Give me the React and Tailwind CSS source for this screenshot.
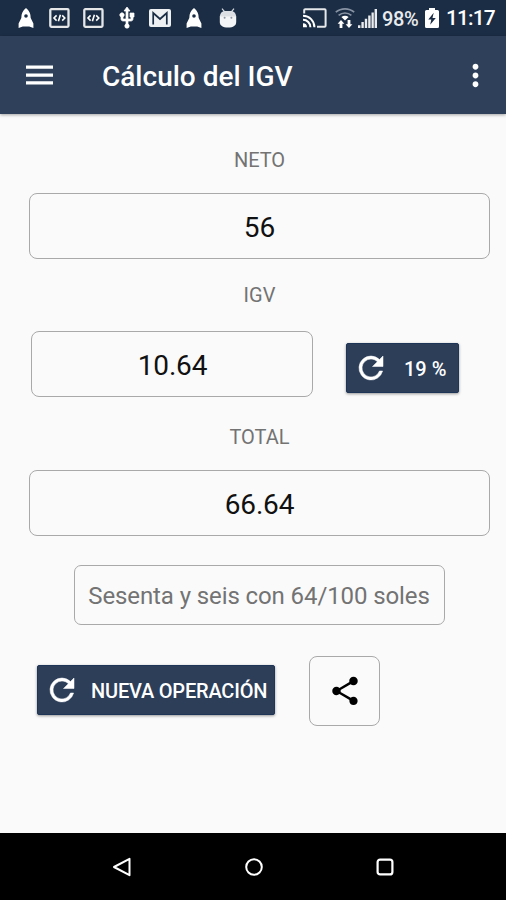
import React from "react";
import { MdMoreVert, MdShare } from "react-icons/md";

const RocketIcon = ({ className }) => (
  <svg viewBox="0 0 16 20" className={`w-4 h-5 shrink-0 ${className}`} fill="#fff">
    <path
      fillRule="evenodd"
      d="M8 0C4.8 2.4 3.4 5.4 3.3 10L.6 15.6V20l4.2-1.6h6.4l4.2 1.6v-4.4L12.7 10C12.6 5.4 11.2 2.4 8 0ZM8 6.2a1.8 1.8 0 1 0 0 3.6 1.8 1.8 0 0 0 0-3.6Z"
    />
  </svg>
);

const CodeIcon = ({ className }) => (
  <svg viewBox="0 0 21 20" className={`w-[21px] h-5 shrink-0 ${className}`} fill="none" stroke="#fff">
    <rect x="1.3" y="1.2" width="18.2" height="17.6" rx="1" strokeWidth="2.3" stroke="#e4e6e8" />
    <path d="M7.6 7.4 5 10l2.6 2.6M13.2 7.4 15.8 10l-2.6 2.6M11.4 6.8l-2 6.4" strokeWidth="1.6" />
  </svg>
);

const UsbIcon = ({ className }) => (
  <svg viewBox="0 0 24 24" className={`w-6 h-6 shrink-0 ${className}`} fill="#fff" stroke="#fff" strokeWidth="0.7">
    <path d="M15 7v4h1v2h-3V5h2l-3-4-3 4h2v8H8v-2.07c.7-.37 1.2-1.08 1.2-1.93 0-1.21-.99-2.2-2.2-2.2S4.8 7.79 4.8 9c0 .85.5 1.56 1.2 1.93V13c0 1.11.89 2 2 2h3v3.05c-.71.37-1.2 1.1-1.2 1.95a2.2 2.2 0 0 0 4.4 0c0-.85-.49-1.58-1.2-1.95V15h3c1.11 0 2-.89 2-2v-2h1V7h-4z" />
  </svg>
);

const MailIcon = ({ className }) => (
  <svg viewBox="0 0 22 18" className={`w-[22px] h-[18px] shrink-0 ${className}`}>
    <rect width="22" height="18" rx="2" fill="#eef0f2" />
    <path d="M4.2 15.5V4l6.8 6 6.8-6v11.5" fill="none" stroke="#1b2d45" strokeWidth="1.7" />
  </svg>
);

const AndroidIcon = ({ className }) => (
  <svg viewBox="0 0 18 20" className={`w-[18px] h-5 shrink-0 ${className}`}>
    <path d="M3 .6l2.5 3M15 .6l-2.5 3" stroke="#d5d9de" strokeWidth="1.2" />
    <path d="M.8 9C1 5.2 3 3 6 3h6c3 0 5 2.2 5.2 6Z" fill="#dcdfe3" />
    <path d="M.8 8.5h16.4V14c0 3.6-2.8 5.5-8.2 5.5S.8 17.6.8 14Z" fill="#f4f5f6" />
    <circle cx="5.6" cy="9.8" r="1" fill="#8d96a3" />
    <circle cx="12.4" cy="9.8" r="1" fill="#8d96a3" />
  </svg>
);

const CastIcon = ({ className }) => (
  <svg viewBox="0 0 24 20" className={`w-6 h-5 shrink-0 ${className}`} fill="none" stroke="#fff" strokeWidth="2">
    <path d="M1.2 5.6V2.2A1 1 0 0 1 2.2 1.2h19.4a1 1 0 0 1 1 1v15.6a1 1 0 0 1-1 1H14" stroke="#e6e8ea" />
    <path d="M0 7.8c6.4 0 11.4 5 11.4 11.4M0 11.8c4.2 0 7.4 3.2 7.4 7.4" />
    <path d="M0 15.2a4 4 0 0 1 4 4H0Z" fill="#fff" stroke="none" />
  </svg>
);

const WifiIcon = ({ className }) => (
  <svg viewBox="0 0 20 20" className={`w-5 h-5 shrink-0 ${className}`} fill="none">
    <path d="M.8 4.2C6-.2 14-.2 19.2 4.2" stroke="#8793a3" strokeWidth="1.7" />
    <path d="M3.6 7.4c3.8-3.2 9-3.2 12.8 0" stroke="#8793a3" strokeWidth="1.7" />
    <path d="M6.4 9c2.2-1.7 5-1.7 7.2 0L10 12.6Z" fill="#fff" />
    <path d="M6 12l3.4 3.8H7.4V20H4.6v-4.2H2.6ZM14 20l3.4-3.8h-2V12h-2.8v4.2h-2Z" fill="#fff" />
  </svg>
);

const SignalIcon = ({ className }) => (
  <svg viewBox="0 0 19 19" className={`w-[19px] h-[19px] shrink-0 ${className}`} fill="#e9ebed">
    <path d="M0 16.2h2.4V19H0ZM3.4 13h2.4v6H3.4ZM6.8 9.8h2.4V19H6.8ZM10.2 6.6h2.4V19h-2.4ZM13.5 3.4h2.3V19h-2.3ZM16.6 0H19v19h-2.4Z" />
  </svg>
);

const BatteryIcon = ({ className }) => (
  <svg viewBox="0 0 14 20" className={`w-3.5 h-5 shrink-0 ${className}`}>
    <path d="M4 0h6v2h2.5A1.5 1.5 0 0 1 14 3.5v15a1.5 1.5 0 0 1-1.5 1.5h-11A1.5 1.5 0 0 1 0 18.5v-15A1.5 1.5 0 0 1 1.5 2H4Z" fill="#fff" />
    <path d="M8.7 4.8 3.3 11.6h3L5.2 16.8l5.6-6.9H7.5Z" fill="#1b2d45" />
  </svg>
);

const MenuIcon = ({ className }) => (
  <svg viewBox="0 0 27 20" className={`w-[27px] h-5 shrink-0 ${className}`} fill="#fff">
    <path d="M0 .4h27v3.3H0ZM0 8.4h27v3.3H0ZM0 16.3h27v3.3H0Z" />
  </svg>
);

const RefreshIcon = ({ className }) => (
  <svg viewBox="0 0 24 24" className={`w-9 h-9 shrink-0 ${className}`} fill="#fff" stroke="#fff" strokeWidth="0.35">
    <path d="M17.65 6.35A7.96 7.96 0 0 0 12 4a8 8 0 1 0 7.73 10h-2.08A6 6 0 1 1 12 6c1.66 0 3.14.69 4.22 1.78L13 11h7V4z" />
  </svg>
);

const StatusBar = () => (
  <div className="h-9 shrink-0 bg-[#1b2d45] flex items-center pl-[18px] pr-2.5 text-white text-[20px]">
    <RocketIcon />
    <CodeIcon className="ml-[15px]" />
    <CodeIcon className="ml-[13px]" />
    <UsbIcon className="ml-[11px]" />
    <MailIcon className="ml-[10px]" />
    <RocketIcon className="ml-[15px]" />
    <AndroidIcon className="ml-[17px]" />
    <div className="ml-auto flex items-center">
      <CastIcon />
      <WifiIcon className="ml-[8px]" />
      <SignalIcon className="ml-[3px]" />
      <span className="ml-[5px] mt-0.5 w-[38px] text-[#e9ebed] tracking-[-0.4px] font-medium whitespace-nowrap">98%</span>
      <BatteryIcon className="ml-[5px]" />
      <span className="ml-[7px] mt-0.5 w-[50px] font-medium text-[21px] tracking-[-0.9px] whitespace-nowrap">11:17</span>
    </div>
  </div>
);

const Header = () => (
  <header className="h-[78px] shrink-0 bg-[#2e405a] flex items-center pl-[26px] pr-[13px] pt-px text-white shadow-[0_1px_3px_rgba(0,0,0,0.35)]">
    <MenuIcon className="-mt-0.5" />
    <h1 className="ml-[49px] mt-[3px] text-[28px] font-medium">Cálculo del IGV</h1>
    <MdMoreVert size={35} className="ml-auto" />
  </header>
);

const Label = ({ children, className }) => (
  <div className={`h-6 text-[20px] leading-6 text-center text-[#737373] ${className}`}>{children}</div>
);

const Field = ({ children, className }) => (
  <div className={`h-[66px] border border-[#a9a9a9] rounded-[8px] flex items-center justify-center pt-1 text-[28px] text-[#111] ${className}`}>
    {children}
  </div>
);

const ActionButton = ({ children, className }) => (
  <button
    className={`h-[50px] bg-[#2c3e58] border border-[#1f3557] rounded-[2px] flex items-center text-white text-[20px] font-medium whitespace-nowrap shadow-[0_1px_3px_rgba(0,0,0,0.4)] ${className}`}
  >
    <RefreshIcon />
    {children}
  </button>
);

const NavBar = () => (
  <nav className="h-[67px] shrink-0 bg-black flex items-center justify-between pl-[112px] pr-[111px]">
    <svg viewBox="0 0 20 20" className="w-5 h-5" fill="none" stroke="#fff" strokeWidth="2" strokeLinejoin="round">
      <path d="M17.5 1.8v16.4L2 10Z" />
    </svg>
    <svg viewBox="0 0 20 20" className="w-5 h-5" fill="none" stroke="#fff" strokeWidth="2">
      <circle cx="10" cy="10" r="7.8" />
    </svg>
    <svg viewBox="0 0 20 20" className="w-5 h-5" fill="none" stroke="#fff" strokeWidth="2.2">
      <rect x="2.6" y="2.6" width="14.8" height="14.8" rx="2.5" />
    </svg>
  </nav>
);

export default function App() {
  return (
    <div className="w-[506px] h-[900px] flex flex-col overflow-hidden bg-[#fafafa] font-['Roboto',sans-serif]">
      <StatusBar />
      <Header />
      <main className="flex-1 flex flex-col pl-[29px] pr-4 pt-[34px]">
        <Label>NETO</Label>
        <Field className="mt-[21px]">56</Field>
        <Label className="mt-6">IGV</Label>
        <div className="mt-[24px] pl-0.5 flex items-center">
          <Field className="w-[282px] pl-px tracking-[-0.15px]">10.64</Field>
          <ActionButton className="ml-[33px] mt-[7px] w-[113px] pl-[6px]">
            <span className="ml-[15px] mt-0.5">19 %</span>
          </ActionButton>
        </div>
        <Label className="mt-7">TOTAL</Label>
        <Field className="mt-[21px] tracking-[-0.15px]">66.64</Field>
        <div className="mt-[29px] w-[371px] h-[60px] self-center -ml-px border border-[#a9a9a9] rounded-[7px] flex items-center justify-center pt-0.5 text-[24px] tracking-[-0.1px] text-[#737373] whitespace-nowrap">
          Sesenta y seis con 64/100 soles
        </div>
        <div className="mt-[31px] pl-2 flex items-center">
          <ActionButton className="-mt-[3px] w-[238px] pl-[6px]">
            <span className="ml-[11px] mt-0.5 tracking-[-0.2px]">NUEVA OPERACIÓN</span>
          </ActionButton>
          <button className="ml-[34px] w-[71px] h-[70px] border border-[#a9a9a9] rounded-[8px] flex items-center justify-center text-black">
            <MdShare size={34} />
          </button>
        </div>
      </main>
      <NavBar />
    </div>
  );
}
